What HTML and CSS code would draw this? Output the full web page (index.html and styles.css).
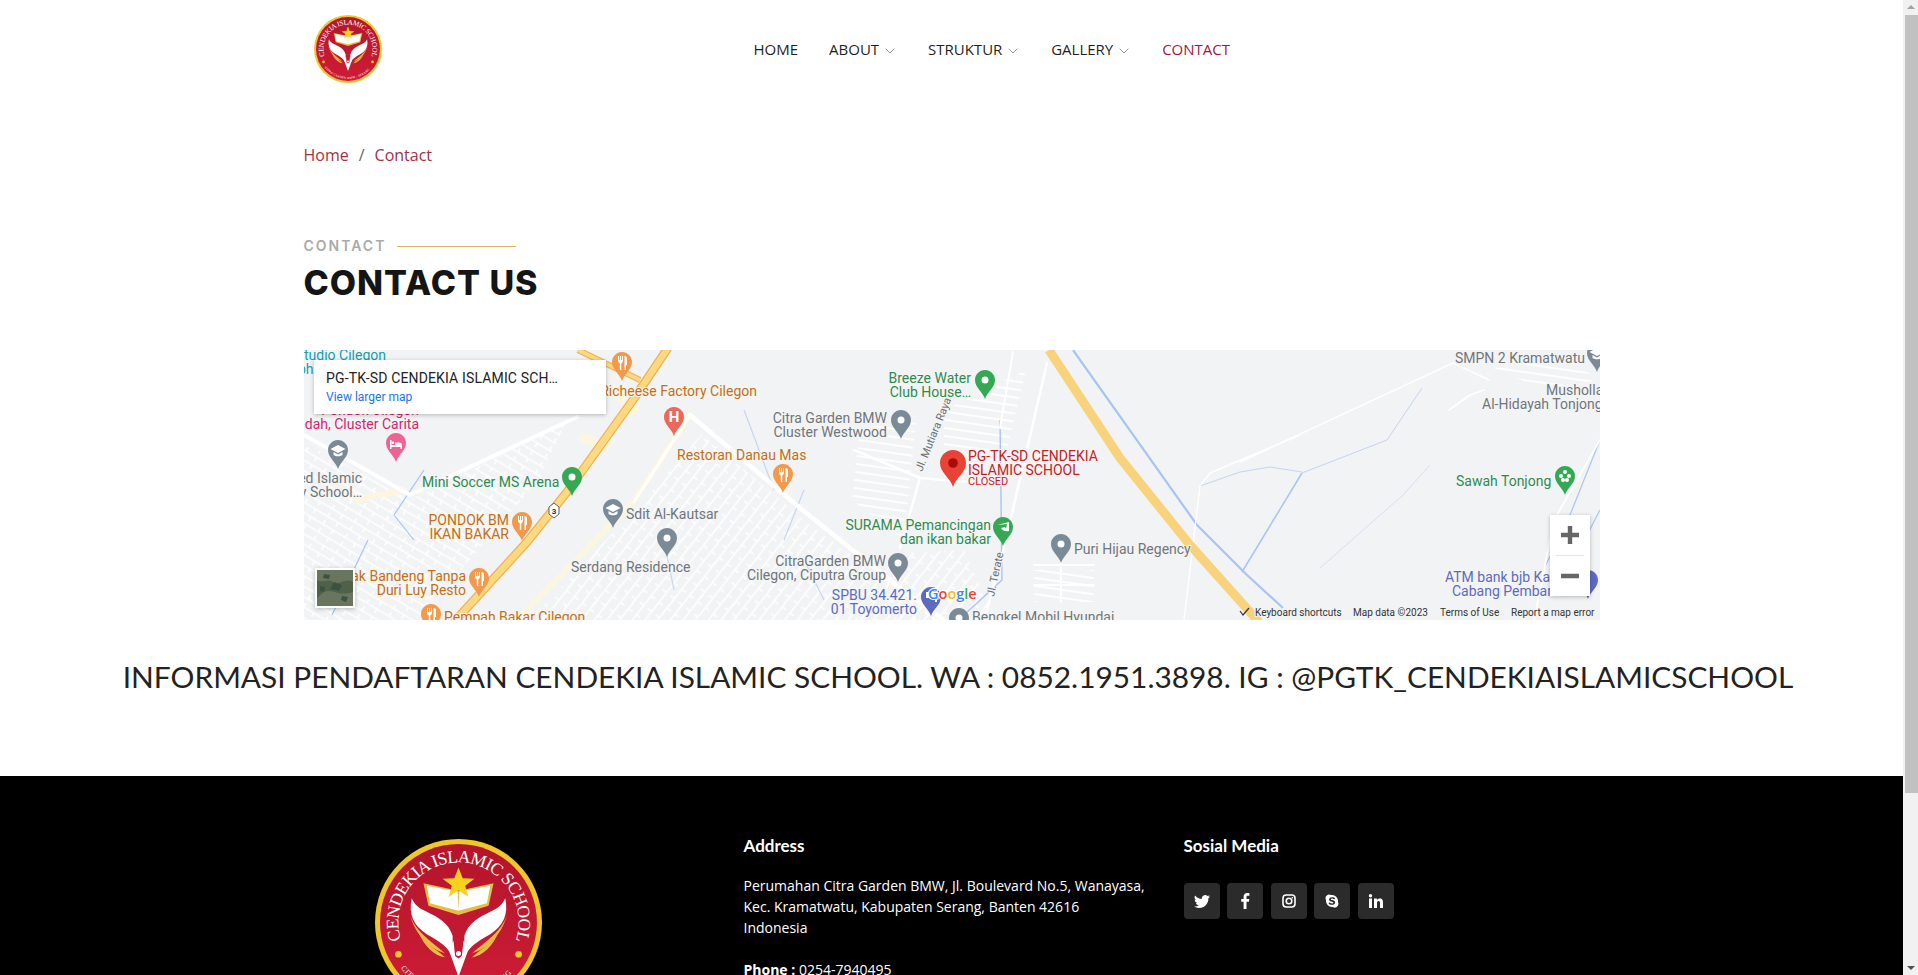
FILE: index.html
```html
<!DOCTYPE html>
<html lang="en">
<head>
    <meta charset="UTF-8">
    <meta name="viewport" content="width=device-width, initial-scale=1.0">
    <title>Contact - Cendekia Islamic School</title>
    <link rel="stylesheet" href="styles.css">
</head>
<body>
    <!-- shared symbols -->
    <svg class="defs" width="0" height="0" aria-hidden="true">
        <defs>
            <linearGradient id="crest" x1="0" y1="0" x2="0" y2="1">
                <stop offset="0" stop-color="#b3152c"/>
                <stop offset="1" stop-color="#cf1c36"/>
            </linearGradient>
            <path id="crestTop" d="M31.1 121A72 72 0 1 1 168.9 121"/>
            <path id="crestBottom" d="M31 154.600A88 88 0 0 0 169 154.600"/>
            <symbol id="crestLogo" viewBox="0 0 200 200">
                <circle cx="100" cy="100" r="100" fill="#f0c52e"/>
                <circle cx="100" cy="100" r="94" fill="url(#crest)"/>
                <text class="crest-name"><textPath href="#crestTop" textLength="269" lengthAdjust="spacing">CENDEKIA ISLAMIC SCHOOL</textPath></text>
                <text class="crest-place"><textPath href="#crestBottom" textLength="150" lengthAdjust="spacing">CITRA GARDEN BMW - SERANG</textPath></text>
                <circle cx="28" cy="138" r="4" fill="#f0c52e"/>
                <circle cx="172" cy="138" r="4" fill="#f0c52e"/>
                <path d="M58 53L100 62 142 53 136 80 100 91 64 80z" fill="#e9bd45"/>
                <path d="M62 56L99 63 100 86 66 77zM138 56L101 63 100 86 134 77z" fill="#fff"/>
                <path d="M100 34l5 13 14 .5-11 8.500 4 13.500-12-8-12 8 4-13.500-11-8.500 14-.5z" fill="#f6d21f"/>
                <path d="M44 71C40 90 46 104 62 114 80 124 88 130 93 142L93 116C88 100 76 94 62 87 52 83 47 78 44 71z" fill="#fff"/>
                <path d="M156 71C160 90 154 104 138 114 120 124 112 130 107 142L107 116C112 100 124 94 138 87 148 83 153 78 156 71z" fill="#fff"/>
                <path d="M42 92C50 112 66 122 84 137 74 134 52 124 42 92zM158 92C150 112 134 122 116 137 126 134 148 124 158 92z" fill="#e9bd45"/>
                <path d="M52 111C58 124 74 132 84 142 72 140 58 128 52 111zM148 111C142 124 126 132 116 142 128 140 142 128 148 111z" fill="#e9bd45"/>
                <path d="M88 132L100 165 112 132 106 122 104 140 100 143 96 140 94 122z" fill="#fff"/>
                <circle cx="100" cy="137" r="3" fill="#fff"/>
            </symbol>
            <path id="pin" d="M10 0C4.500 0 0 4.500 0 10c0 7.500 8 12 10 19 2-7 10-11.500 10-19C20 4.500 15.500 0 10 0z"/>
            <g id="fork">
                <path d="M6 4v5c0 1.300 1 2 1.800 2.300V18h1.500v-6.700C10 11 11 10.300 11 9V4h-1v4H9V4H8v4H7V4zM12.500 4v14H14v-5h1V6c0-1.200-1.200-2-2.500-2z" fill="#fff"/>
            </g>
            <path id="cap" d="M10 5L2.500 9 10 13l7.500-4zM5.500 12v3c2.500 1.800 6.500 1.800 9 0v-3L10 14.500z" fill="#fff"/>
            <pattern id="blocksA" width="26" height="9" patternUnits="userSpaceOnUse" patternTransform="rotate(31)">
                <path d="M0 4.500H26M2 0V4.500M14 4.500V9" stroke="#fff" stroke-width="1.600" fill="none"/>
            </pattern>
            <pattern id="blocksB" width="24" height="10" patternUnits="userSpaceOnUse" patternTransform="rotate(-52)">
                <path d="M0 5H24M8 0V5M20 5V10" stroke="#fff" stroke-width="1.500" fill="none"/>
            </pattern>
            <pattern id="blocksC" width="30" height="8" patternUnits="userSpaceOnUse" patternTransform="rotate(8)">
                <path d="M0 4H30" stroke="#fff" stroke-width="1.800" fill="none"/>
            </pattern>
            <clipPath id="mapClip"><rect width="1296" height="270"/></clipPath>
        </defs>
    </svg>

    <div class="page">
        <header class="site-header">
            <a class="logo" href="#"><svg width="68" height="68"><use href="#crestLogo"/></svg></a>
            <nav class="nav">
                <a href="#">Home</a>
                <a href="#">About <svg class="chev" width="10" height="6" viewBox="0 0 10 6"><path d="M.7.7L5 5 9.300.7"/></svg></a>
                <a href="#">Struktur <svg class="chev" width="10" height="6" viewBox="0 0 10 6"><path d="M.7.7L5 5 9.300.7"/></svg></a>
                <a href="#">Gallery <svg class="chev" width="10" height="6" viewBox="0 0 10 6"><path d="M.7.7L5 5 9.300.7"/></svg></a>
                <a class="active" href="#">Contact</a>
            </nav>
        </header>

        <main>
            <ol class="breadcrumb">
                <li><a href="#">Home</a></li>
                <li class="sep">/</li>
                <li><a href="#">Contact</a></li>
            </ol>

            <section class="contact">
                <div class="section-title">
                    <p>Contact</p>
                    <h2>Contact Us</h2>
                </div>

                <!-- map: a free canvas, everything is placed on it by coordinates -->
                <svg class="map" viewBox="0 0 1296 270" width="1296" height="270">
                    <g clip-path="url(#mapClip)">
                        <rect width="1296" height="270" fill="#f1f3f4"/>

                        <!-- housing blocks -->
                        <path d="M0 92L106 150 232 88 262 72 236 128 170 205 112 270H0z" fill="url(#blocksA)"/>
                        <path d="M340 150L398 84 500 170 600 246 640 270H226z" fill="url(#blocksB)"/>
                        <path d="M556 78L612 70 600 190 548 150z" fill="url(#blocksC)"/>
                        <path d="M640 60L722 20 700 110 640 130z" fill="url(#blocksC)"/>
                        <path d="M560 205L660 200 690 270H600z" fill="url(#blocksB)"/>
                        <path d="M730 220H790V252H730z" fill="url(#blocksC)"/>
                        <path d="M1190 18L1260 8 1296 30 1240 40z" fill="url(#blocksC)"/>

                        <!-- pale roads and patches -->
                        <g fill="none" stroke="#fdf6df" stroke-linecap="round">
                            <path d="M310 40L330 60M280 88L300 96" stroke-width="10"/>
                            <path d="M386 65L329 152 213 270" stroke-width="6"/>
                            <path d="M52 150L100 140" stroke-width="6"/>
                        </g>

                        <!-- rivers -->
                        <g fill="none" stroke="#a9c4f2" stroke-linejoin="round">
                            <path d="M769 0L893 175 943 225 979 258" stroke-width="2.200"/>
                            <path d="M938 222L998 123" stroke-width="1.500"/>
                            <path d="M998 123L1083 90 1118 38" stroke-width="1" stroke="#c3d4f2"/>
                            <path d="M896 136L936 122 966 117 998 122" stroke-width="1" stroke="#c3d4f2"/>
                            <path d="M1016 218L1099 145 1126 115" stroke-width="1" stroke="#d6e0f2"/>
                            <path d="M696 70L698 230 660 265" stroke-width="1.400"/>
                            <path d="M120 120L90 165 110 190M28 265L64 190" stroke-width="1.200"/>
                            <path d="M440 60L470 140M500 140L480 190M360 190L370 240M500 210L520 250" stroke-width="1.200" stroke="#c6d6f2"/>
                            <path d="M1296 90L1260 180 1240 218M1296 160L1270 210" stroke-width="1.200"/>
                        </g>

                        <!-- streets -->
                        <g fill="none" stroke="#fff" stroke-linejoin="round" stroke-linecap="round">
                            <path d="M0 85L106 145 273 67" stroke-width="4"/>
                            <path d="M386 65L496 158 596 238 640 270" stroke-width="4.500"/>
                            <path d="M330 152L386 65" stroke-width="3"/>
                            <path d="M743 13L699 202 680 270" stroke-width="2.500"/>
                            <path d="M709 2L696 78" stroke-width="2"/>
                            <path d="M616 128L596 198M616 128L700 135M550 100L616 128" stroke-width="2.500"/>
                            <path d="M936 112L1149 13 1185 30" stroke-width="1.400"/>
                            <path d="M896 136L906 123 996 85" stroke-width="1.400"/>
                            <path d="M896 136L880 270" stroke-width="1.400"/>
                            <path d="M1145 60L1166 45 1180 40M1296 90L1250 170 1230 270" stroke-width="1.800"/>
                            <path d="M730 215H790M757 212V252M730 235H790" stroke-width="2"/>
                        </g>

                        <!-- highways -->
                        <g fill="none" stroke-linejoin="round">
                            <path d="M364 -2L329 50 263 142 223 192 150 272" stroke="#efb04a" stroke-width="9"/>
                            <path d="M364 -2L329 50 263 142 223 192 150 272" stroke="#fdd883" stroke-width="6.500"/>
                            <path d="M274 0L336 30" stroke="#efb04a" stroke-width="6"/>
                            <path d="M274 0L336 30" stroke="#fdd883" stroke-width="4"/>
                            <path d="M745 0L816 108 886 195 946 262 955 272" stroke="#f9d27c" stroke-width="9"/>
                        </g>

                        <!-- route shield -->
                        <path d="M245 157l5-4 5 4v7l-5 4-5-4z" fill="#fff" stroke="#5f6368" stroke-width="1"/>
                        <text class="shield" x="250" y="164">3</text>

                        <!-- teal, pink -->
                        <text class="lb teal" x="0" y="10">tudio Cilegon</text>
                        <text class="lb teal" x="-6" y="24">ph</text>
                        <text class="lb pink" x="115" y="65" text-anchor="end">Pondok Cilegon</text>
                        <text class="lb pink" x="115" y="79" text-anchor="end">ndah, Cluster Carita</text>

                        <!-- grey labels -->
                        <text class="lb grey" x="58" y="133" text-anchor="end">ed Islamic</text>
                        <text class="lb grey" x="58" y="147" text-anchor="end">y School…</text>
                        <text class="lb grey" x="322" y="169">Sdit Al-Kautsar</text>
                        <text class="lb grey" x="267" y="222">Serdang Residence</text>
                        <text class="lb grey" x="583" y="73" text-anchor="end">Citra Garden BMW</text>
                        <text class="lb grey" x="583" y="87" text-anchor="end">Cluster Westwood</text>
                        <text class="lb grey" x="582" y="216" text-anchor="end">CitraGarden BMW</text>
                        <text class="lb grey" x="582" y="230" text-anchor="end">Cilegon, Ciputra Group</text>
                        <text class="lb grey" x="770" y="204">Puri Hijau Regency</text>
                        <text class="lb grey" x="668" y="272">Bengkel Mobil Hyundai</text>
                        <text class="lb grey" x="1151" y="13">SMPN 2 Kramatwatu</text>
                        <text class="lb grey" x="1242" y="45">Musholla</text>
                        <text class="lb grey" x="1178" y="59">Al-Hidayah Tonjong</text>
                        <text class="road" transform="translate(618 122) rotate(-68)">Jl. Mutiara Raya</text>
                        <text class="road" transform="translate(690 247) rotate(-78)">Jl. Terate</text>

                        <!-- orange labels -->
                        <text class="lb orange" x="453" y="46" text-anchor="end">Richeese Factory Cilegon</text>
                        <text class="lb orange" x="373" y="110">Restoran Danau Mas</text>
                        <text class="lb orange" x="205" y="175" text-anchor="end">PONDOK BM</text>
                        <text class="lb orange" x="205" y="189" text-anchor="end">IKAN BAKAR</text>
                        <text class="lb orange" x="162" y="231" text-anchor="end">Pak Bandeng Tanpa</text>
                        <text class="lb orange" x="162" y="245" text-anchor="end">Duri Luy Resto</text>
                        <text class="lb orange" x="140" y="272">Pempah Bakar Cilegon</text>

                        <!-- green labels -->
                        <text class="lb green" x="118" y="137">Mini Soccer MS Arena</text>
                        <text class="lb green" x="667" y="33" text-anchor="end">Breeze Water</text>
                        <text class="lb green" x="667" y="47" text-anchor="end">Club House…</text>
                        <text class="lb green" x="687" y="180" text-anchor="end">SURAMA Pemancingan</text>
                        <text class="lb green" x="687" y="194" text-anchor="end">dan ikan bakar</text>
                        <text class="lb green" x="1152" y="136">Sawah Tonjong</text>

                        <!-- blue labels -->
                        <text class="lb blue" x="613" y="250" text-anchor="end">SPBU 34.421.</text>
                        <text class="lb blue" x="613" y="264" text-anchor="end">01 Toyomerto</text>
                        <text class="lb blue" x="1141" y="232">ATM bank bjb Kantor</text>
                        <text class="lb blue" x="1148" y="246">Cabang Pembantu</text>

                        <!-- pins -->
                        <g fill="#f2994a">
                            <g transform="translate(308 2)"><use href="#pin"/><use href="#fork"/></g>
                            <g transform="translate(469 114)"><use href="#pin"/><use href="#fork"/></g>
                            <g transform="translate(208 162)"><use href="#pin"/><use href="#fork"/></g>
                            <g transform="translate(165 218)"><use href="#pin"/><use href="#fork"/></g>
                            <g transform="translate(117 254)"><use href="#pin"/><use href="#fork"/></g>
                        </g>
                        <g fill="#7b8a97">
                            <g transform="translate(24 90)"><use href="#pin"/><use href="#cap"/></g>
                            <g transform="translate(299 149)"><use href="#pin"/><use href="#cap"/></g>
                            <g transform="translate(1283 -7)"><use href="#pin"/><use href="#cap"/></g>
                            <g transform="translate(353 178)"><use href="#pin"/><circle cx="10" cy="10" r="3.500" fill="#fff"/></g>
                            <g transform="translate(587 60)"><use href="#pin"/><circle cx="10" cy="10" r="3.500" fill="#fff"/></g>
                            <g transform="translate(584 203)"><use href="#pin"/><circle cx="10" cy="10" r="3.500" fill="#fff"/></g>
                            <g transform="translate(747 184)"><use href="#pin"/><circle cx="10" cy="10" r="3.500" fill="#fff"/></g>
                            <g transform="translate(645 258)"><use href="#pin"/><circle cx="10" cy="10" r="3.500" fill="#fff"/></g>
                        </g>
                        <g fill="#34a853">
                            <g transform="translate(258 117)"><use href="#pin"/><circle cx="10" cy="10" r="3.500" fill="#fff"/></g>
                            <g transform="translate(671 20)"><use href="#pin"/><circle cx="10" cy="10" r="3.500" fill="#fff"/></g>
                            <g transform="translate(689 167)"><use href="#pin"/><path d="M4 8l12-3v9c-4 1-7-1-8-3l4-1 1 2 1-5z" fill="#fff"/></g>
                            <g transform="translate(1251 116)"><use href="#pin"/><circle cx="10" cy="6" r="2" fill="#fff"/><circle cx="6" cy="10" r="2" fill="#fff"/><circle cx="14" cy="10" r="2" fill="#fff"/><circle cx="8" cy="14" r="2" fill="#fff"/><circle cx="12" cy="14" r="2" fill="#fff"/></g>
                        </g>
                        <g transform="translate(360 57)" fill="#ee675c"><use href="#pin"/><text class="pin-h" x="10" y="15">H</text></g>
                        <g transform="translate(82 83)" fill="#f06292"><use href="#pin"/><path d="M4 7v9h1.500v-2h9v2H16v-4c0-1.500-1-2.500-2.500-2.500H9V12H5.500V7zM7 8.500a1.300 1.300 0 1 0 0 2.600 1.300 1.300 0 0 0 0-2.600z" fill="#fff"/></g>
                        <g transform="translate(617 237)" fill="#5c6bc0"><use href="#pin"/><path d="M5 5h8v6h-8zM13 8l3 2v5h-2v-5z" fill="#fff"/></g>
                        <g transform="translate(1274 220)" fill="#5c6bc0"><use href="#pin"/></g>

                        <!-- selected place -->
                        <g transform="translate(636 100)">
                            <path d="M13 0C5.800 0 0 5.800 0 13c0 10 10 14 13 24 3-10 13-14 13-24C26 5.800 20.200 0 13 0z" fill="#ea4335"/>
                            <circle cx="13" cy="13" r="4.800" fill="#a50e0e"/>
                        </g>
                        <text class="lb red" x="664" y="111">PG-TK-SD CENDEKIA</text>
                        <text class="lb red" x="664" y="125">ISLAMIC SCHOOL</text>
                        <text class="lb red small" x="664" y="135">CLOSED</text>

                        <!-- map chrome -->
                        <rect class="card" x="10" y="10" width="292" height="54"/>
                        <text class="card-title" x="22" y="33">PG-TK-SD CENDEKIA ISLAMIC SCH…</text>
                        <text class="card-link" x="22" y="51">View larger map</text>

                        <rect class="card" x="11" y="218" width="40" height="40"/>
                        <rect x="13" y="220" width="36" height="36" fill="#4f6249"/>
                        <path d="M13 220h36v12c-8-5-14 4-20 0s-10 2-16-2zM20 242c8-4 14 5 29 0v14H13v-8z" fill="#6a755f"/>
                        <path d="M30 232l8 3-3 6-9-2zM16 236l5 1-1 5-4-1zM38 246l6 1-2 5-5-2zM20 224l6 1-1 4-6-1z" fill="#3b5240"/>

                        <rect class="card" x="1246" y="165" width="40" height="81"/>
                        <path d="M1252 205.500H1280" stroke="#e6e6e6"/>
                        <path d="M1257 185H1275M1266 176V194M1257 226H1275" stroke="#666" stroke-width="4.400" fill="none"/>

                        <path d="M936 261l3 4 6-7" stroke="#333" stroke-width="1.200" fill="none"/>
                        <text class="lb-google" x="624" y="249"><tspan fill="#4285f4">G</tspan><tspan fill="#ea4335">o</tspan><tspan fill="#fbbc04">o</tspan><tspan fill="#4285f4">g</tspan><tspan fill="#34a853">l</tspan><tspan fill="#ea4335">e</tspan></text>
                        <text class="attr" x="951" y="266">Keyboard shortcuts</text>
                        <text class="attr" x="1049" y="266">Map data ©2023</text>
                        <text class="attr" x="1136" y="266">Terms of Use</text>
                        <text class="attr" x="1207" y="266">Report a map error</text>
                    </g>
                </svg>
            </section>

            <h3 class="notice">INFORMASI PENDAFTARAN CENDEKIA ISLAMIC SCHOOL. WA : 0852.1951.3898. IG : @PGTK_CENDEKIAISLAMICSCHOOL</h3>
        </main>

        <footer class="footer">
            <div class="footer-row">
                <div class="footer-col">
                    <svg class="footer-logo" width="167" height="167"><use href="#crestLogo"/></svg>
                </div>
                <div class="footer-col">
                    <h4>Address</h4>
                    <p>Perumahan Citra Garden BMW, Jl. Boulevard No.5, Wanayasa,<br>Kec. Kramatwatu, Kabupaten Serang, Banten 42616<br>Indonesia</p>
                    <p class="phone"><strong>Phone :</strong> 0254-7940495</p>
                </div>
                <div class="footer-col">
                    <h4>Sosial Media</h4>
                    <div class="social">
                        <a href="#"><svg width="16" height="16" viewBox="0 0 16 16"><path d="M5.026 15c6.038 0 9.341-5.003 9.341-9.334 0-.14 0-.282-.006-.422A6.685 6.685 0 0 0 16 3.542a6.658 6.658 0 0 1-1.889.518 3.301 3.301 0 0 0 1.447-1.817 6.533 6.533 0 0 1-2.087.793A3.286 3.286 0 0 0 7.875 6.030a9.325 9.325 0 0 1-6.767-3.429 3.289 3.289 0 0 0 1.018 4.382A3.323 3.323 0 0 1 .64 6.575v.045a3.288 3.288 0 0 0 2.632 3.218 3.203 3.203 0 0 1-.865.115 3.230 3.230 0 0 1-.614-.057 3.283 3.283 0 0 0 3.067 2.277A6.588 6.588 0 0 1 .78 13.580a6.320 6.320 0 0 1-.78-.045A9.344 9.344 0 0 0 5.026 15z"/></svg></a>
                        <a href="#"><svg width="16" height="16" viewBox="0 0 16 16"><path d="M9.500 16V8.700h2.400l.4-2.800H9.500V4.100c0-.8.2-1.400 1.400-1.400h1.500V.2C12.100.1 11.200 0 10.200 0 8 0 6.600 1.300 6.600 3.800v2.100H4.200v2.800h2.400V16z"/></svg></a>
                        <a href="#"><svg width="16" height="16" viewBox="0 0 16 16"><rect class="ig" x="2" y="2" width="12" height="12" rx="3.200"/><circle class="ig" cx="8" cy="8" r="2.800"/><circle cx="11.300" cy="4.700" r=".8"/></svg></a>
                        <a href="#"><svg width="16" height="16" viewBox="0 0 16 16"><path fill-rule="evenodd" d="M4.671 1.500c.88 0 1.600.2 2.400.6a6 6 0 0 1 6.900 6.800c.3.600.5 1.200.5 1.900a3.700 3.700 0 0 1-5.500 3.200A6 6 0 0 1 2.100 7.100 3.700 3.700 0 0 1 4.671 1.500zM8.100 4.300c-1.700 0-3 .8-3 2.200 0 2.600 4.200 1.900 4.200 3.200 0 .5-.5.800-1.300.8-1.500 0-1.600-1-2.500-1-.5 0-.8.300-.8.700 0 1 1.500 1.500 3.200 1.500 1.900 0 3.200-.8 3.200-2.300 0-2.700-4.200-2-4.200-3.200 0-.4.400-.7 1.100-.7 1.300 0 1.400.8 2.200.8.500 0 .8-.3.800-.7 0-.8-1.500-1.300-2.900-1.300z"/></svg></a>
                        <a href="#"><svg width="16" height="16" viewBox="0 0 16 16"><path d="M1 5.600h3V15H1zM2.500 1a1.700 1.700 0 1 1 0 3.400 1.700 1.700 0 0 1 0-3.400zM6 5.600h2.900v1.300c.5-.9 1.500-1.500 2.900-1.500 2.700 0 3.200 1.800 3.200 4.100V15h-3v-4.900c0-1.100-.1-2.200-1.500-2.200S9 9 9 10.100V15H6z"/></svg></a>
                    </div>
                </div>
            </div>
        </footer>
    </div>

    <!-- the browser window's scrollbar -->
    <div class="scrollbar">
        <span class="arrow-up"></span>
        <span class="thumb"></span>
        <span class="arrow-down"></span>
    </div>
</body>
</html>
```

FILE: styles.css
```css
body {
    font-family: "Open Sans", sans-serif;
    background-color: #fff;
    color: #222;
    margin: 0;
    padding: 0;
    display: flex;
    height: 100vh;
    overflow: hidden;
}

a {
    color: inherit;
    text-decoration: none;
}

.defs {
    position: absolute;
}

.page {
    flex: 1;
    min-width: 0;
    overflow: hidden;
}

/* Scrollbar */
.scrollbar {
    width: 15px;
    flex: none;
    background: #f1f1f1;
    display: flex;
    flex-direction: column;
    align-items: center;
}

.thumb {
    width: 13px;
    height: 778px;
    margin-left: 2px;
    background: #c1c1c1;
}

.arrow-up,
.arrow-down {
    width: 0;
    height: 0;
    border-left: 4px solid transparent;
    border-right: 4px solid transparent;
}

.arrow-up {
    margin: 5px 0 6px;
    border-bottom: 4px solid #a3a3a3;
}

.arrow-down {
    margin-top: auto;
    margin-bottom: 5px;
    border-top: 4px solid #505050;
}

/* Header */
.site-header {
    width: 1296px;
    height: 96px;
    margin: 0 auto;
    display: flex;
    align-items: center;
}

.logo {
    display: flex;
    margin: 2px 0 0 10px;
}

.nav {
    display: flex;
    align-items: center;
    gap: 31px;
    margin-left: 372px;
    padding-top: 1px;
    font-size: 15px;
    text-transform: uppercase;
    color: #1f1f1f;
}

.nav .active {
    color: #a8163a;
}

.chev {
    margin: 0 2px;
    vertical-align: 1px;
    fill: none;
    stroke: #888;
    stroke-width: 0.9;
}

/* Logo lettering */
.crest-name {
    font-family: "Liberation Serif", serif;
    font-size: 21px;
    fill: #fff;
}

.crest-place {
    font-family: "Liberation Serif", serif;
    font-size: 9px;
    fill: #fff;
}

/* Breadcrumb */
.breadcrumb {
    list-style: none;
    width: 1296px;
    margin: 47px auto 0;
    padding: 0;
    display: flex;
    gap: 10px;
    font-size: 16px;
    line-height: 24px;
    color: #a23245;
}

.breadcrumb .sep {
    color: #666;
}

/* Contact section */
.contact {
    width: 1296px;
    margin: 0 auto;
    padding-top: 68px;
}

.section-title p {
    margin: 0;
    display: flex;
    align-items: center;
    gap: 11px;
    font-family: Inter, sans-serif;
    font-size: 14px;
    line-height: 22px;
    font-weight: 600;
    letter-spacing: 2px;
    text-transform: uppercase;
    color: #aaa;
}

.section-title p::after {
    content: "";
    width: 119px;
    height: 1px;
    background: #e0b45c;
}

.section-title h2 {
    margin: 3px 0 0;
    font-family: Inter, sans-serif;
    font-size: 34px;
    line-height: 46px;
    font-weight: 800;
    letter-spacing: 1px;
    text-transform: uppercase;
    color: #151515;
}

.map {
    display: block;
    margin-top: 44px;
}

/* Map labels */
.lb {
    font-family: Roboto, sans-serif;
    font-size: 14px;
    paint-order: stroke;
    stroke: #f4f5f6;
    stroke-width: 2px;
}

.lb.small { font-size: 11px; }
.teal { fill: #129eaf; }
.pink { fill: #d6246e; }
.grey { fill: #70757a; }
.orange { fill: #c5700f; }
.green { fill: #2e8b4f; }
.blue { fill: #5c6bc0; }
.red { fill: #c5221f; }

.road {
    font-family: Roboto, sans-serif;
    font-size: 11px;
    fill: #6b7075;
    paint-order: stroke;
    stroke: #f4f5f6;
    stroke-width: 2px;
}

.shield {
    font-family: Roboto, sans-serif;
    font-size: 8px;
    font-weight: 700;
    text-anchor: middle;
    fill: #333;
}

.pin-h {
    font-family: Roboto, sans-serif;
    font-size: 15px;
    font-weight: 700;
    text-anchor: middle;
    fill: #fff;
}

.card {
    fill: #fff;
    filter: drop-shadow(0 1px 2px rgba(0, 0, 0, 0.25));
}

.card-title {
    font-family: Roboto, sans-serif;
    font-size: 14px;
    letter-spacing: 0.15px;
    fill: #222;
}

.card-link {
    font-family: Roboto, sans-serif;
    font-size: 12px;
    fill: #1a73e8;
}

.lb-google {
    font-family: "Open Sans", sans-serif;
    font-size: 14.500px;
    font-weight: 600;
    paint-order: stroke;
    stroke: #fff;
    stroke-width: 2px;
}

.attr {
    font-family: Roboto, sans-serif;
    font-size: 10px;
    fill: #333;
    paint-order: stroke;
    stroke: #f1f3f4;
    stroke-width: 2px;
}

/* Notice line */
.notice {
    margin: 0;
    padding: 39px 0 81px 13px;
    text-align: center;
    white-space: nowrap;
    font-family: Lato, sans-serif;
    font-size: 29.850px;
    line-height: 36px;
    font-weight: 400;
    color: #222;
}

/* Footer */
.footer {
    background: #000;
    color: #fff;
    min-height: 408px;
    padding-top: 60px;
    box-sizing: border-box;
}

.footer-row {
    width: 1296px;
    margin: 0 auto;
    display: grid;
    grid-template-columns: repeat(3, 416px);
    column-gap: 24px;
    font-size: 14px;
    line-height: 21px;
}

.footer-logo {
    display: block;
    margin: 3px 0 0 71px;
}

.footer h4 {
    margin: 0 0 20px;
    font-family: Lato, sans-serif;
    font-size: 17px;
    line-height: 19px;
    font-weight: 700;
}

.footer p {
    margin: 0;
}

.footer .phone {
    margin-top: 21px;
}

.social {
    display: flex;
    gap: 7.500px;
    margin-top: 28px;
}

.social a {
    width: 36px;
    height: 36px;
    border-radius: 4px;
    background: #2b2b2b;
    display: flex;
    align-items: center;
    justify-content: center;
}

.social svg {
    fill: #fff;
}

.social .ig {
    fill: none;
    stroke: #fff;
    stroke-width: 1.600;
}
```
